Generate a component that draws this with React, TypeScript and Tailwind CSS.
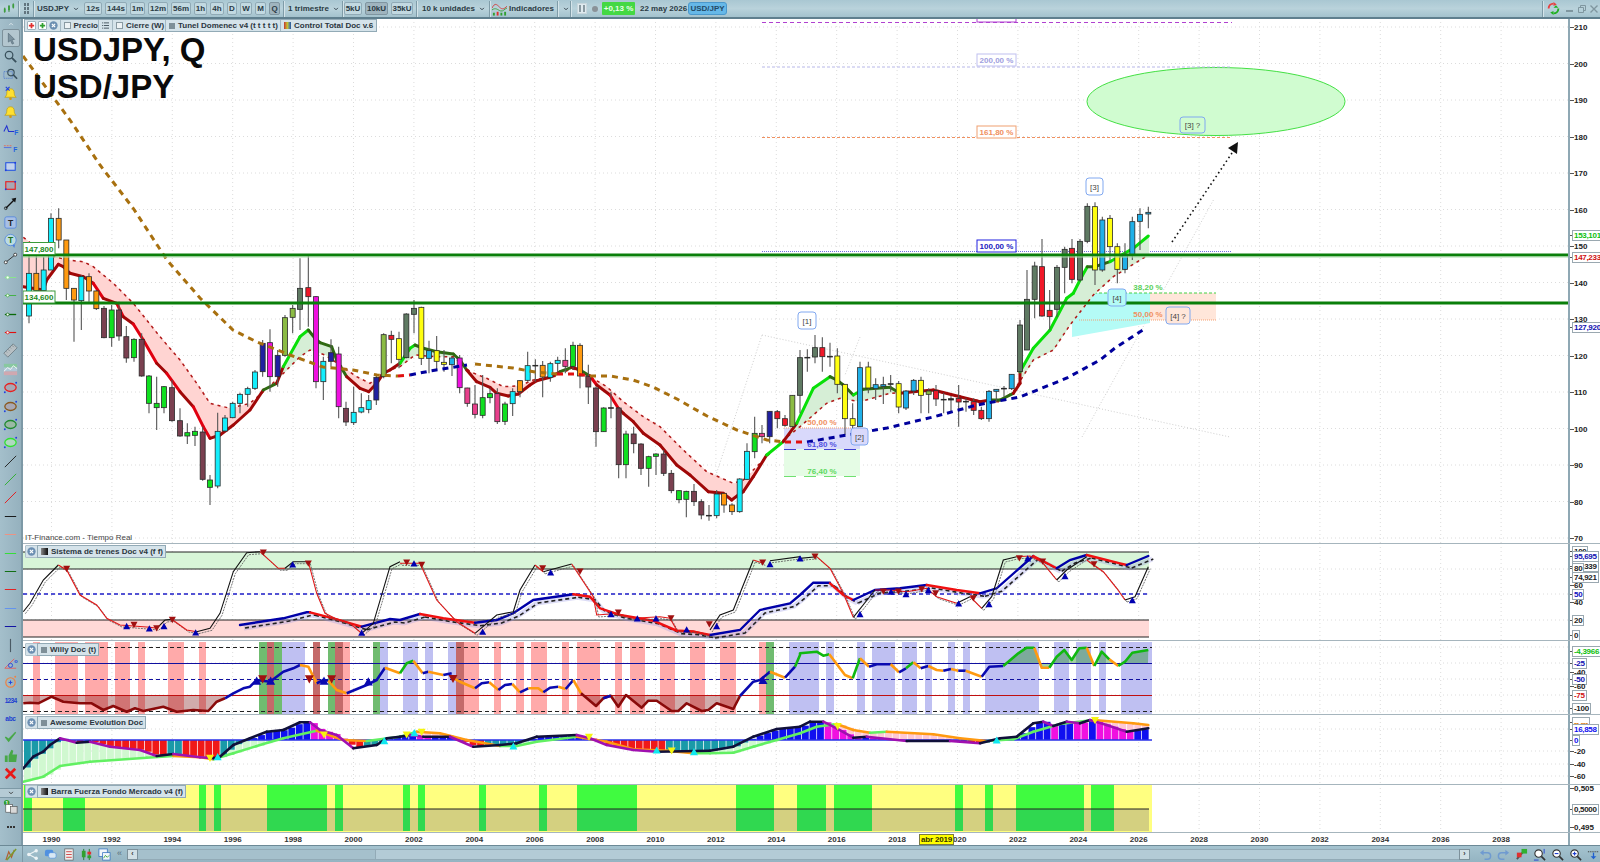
import React from 'react';

type Pt = [number, number];

// points were read off the chart in crop coordinates, P turns them into page coordinates
const P = (ox: number, oy: number, a: number[]): Pt[] => {
  const out: Pt[] = [];
  for (let i = 0; i < a.length; i += 2) out.push([ox + a[i] / 3, oy + a[i + 1] / 3]);
  return out;
};
const Z3 = (a: number[]) => P(0, 520, a);
const Z11 = (a: number[]) => P(400, 540, a);
const Z12 = (a: number[]) => P(800, 540, a);
const d = (pts: Pt[]) => pts.map((p, i) => `${i ? 'L' : 'M'}${p[0].toFixed(1)} ${p[1].toFixed(1)}`).join(' ');
const at = (pts: Pt[], x: number) => {
  if (x <= pts[0][0]) return pts[0][1];
  for (let i = 1; i < pts.length; i++) {
    if (x <= pts[i][0]) {
      const [x0, y0] = pts[i - 1];
      const [x1, y1] = pts[i];
      return y0 + ((y1 - y0) * (x - x0)) / Math.max(x1 - x0, 0.01);
    }
  }
  return pts[pts.length - 1][1];
};

const C: Record<string, string> = {
  c: '#14eefc', o: '#ff9a10', b: '#7a4050', g: '#10e020', n: '#2020a0', m: '#f010e0', v: '#8bbb44',
  s: '#5f7a63', r: '#f01828', y: '#ffff10', l: '#20b0e8', p: '#e8408c', k: '#222222',
};

type Candle = [number, number, number, number, number, string];
const candleGroups: { ox: number; oy: number; c: Candle[] }[] = [
  { ox: 0, oy: 120, c: [
    [87, 405, 460, 588, 610, 'c'], [109, 405, 460, 512, 512, 'o'], [131, 410, 450, 512, 512, 'c'], [153, 280, 295, 450, 450, 'c'],
    [176, 265, 295, 360, 385, 'o'], [199, 360, 360, 505, 540, 'o'], [222, 505, 505, 540, 665, 'o'], [244, 465, 470, 542, 630, 'c'],
    [267, 460, 470, 513, 545, 'o'], [289, 510, 513, 566, 570, 'o'], [312, 558, 565, 653, 655, 'b'], [335, 555, 570, 653, 680, 'g'],
    [357, 545, 570, 648, 662, 'b'], [379, 618, 650, 714, 728, 'b'], [402, 655, 658, 713, 725, 'g'], [425, 640, 658, 768, 770, 'b'],
    [447, 765, 768, 850, 880, 'g'], [470, 770, 850, 863, 930, 'g'], [492, 798, 800, 863, 880, 'g'], [516, 780, 803, 902, 905, 'b'],
    [540, 865, 902, 948, 950, 'b'], [562, 910, 938, 948, 972, 'g'], [585, 920, 934, 946, 978, 'g'], [608, 920, 936, 1078, 1082, 'b'],
    [630, 1065, 1080, 1102, 1155, 'g'], [653, 878, 934, 1098, 1105, 'c'], [675, 885, 894, 933, 935, 'c'], [698, 845, 850, 893, 895, 'c'],
    [720, 818, 823, 850, 880, 'c'], [743, 800, 806, 823, 860, 'c'], [765, 750, 756, 805, 810, 'c'], [788, 660, 670, 755, 770, 'n'],
    [810, 628, 668, 770, 815, 'm'], [833, 690, 706, 770, 800, 'n'], [855, 585, 593, 706, 710, 'v'], [878, 555, 565, 592, 640, 'v'],
    [900, 415, 505, 568, 630, 's'], [925, 405, 503, 530, 620, 'r'], [948, 528, 530, 785, 805, 'm'], [970, 710, 724, 785, 840, 'c'],
    [993, 658, 698, 724, 740, 'n'], [1016, 680, 702, 860, 895, 'm'], [1038, 845, 865, 906, 918, 'b'], [1061, 800, 877, 908, 915, 'c'],
    [1084, 820, 863, 876, 880, 'c'], [1106, 825, 842, 868, 880, 'c'], [1129, 765, 772, 840, 855, 'n'], [1151, 640, 644, 770, 775, 'v'],
    [1174, 632, 646, 658, 730, 'r'],
  ] },
  { ox: 390, oy: 290, c: [
    [27, 125, 146, 208, 235, 'y'], [49, 70, 72, 203, 205, 's'], [72, 30, 55, 73, 130, 's'], [94, 50, 52, 205, 225, 'y'],
    [117, 152, 182, 205, 250, 'l'], [140, 138, 182, 214, 240, 'y'], [162, 180, 217, 223, 245, 'y'], [186, 200, 204, 224, 258, 'l'],
    [209, 195, 204, 293, 310, 'm'], [232, 293, 294, 340, 350, 'p'], [255, 285, 342, 373, 385, 'p'], [278, 255, 323, 376, 385, 'g'],
    [300, 295, 311, 323, 340, 'g'], [322, 295, 311, 395, 402, 'p'], [345, 335, 342, 394, 405, 'g'], [368, 295, 305, 341, 378, 'c'],
    [390, 270, 272, 305, 322, 'o'], [413, 185, 227, 271, 275, 'c'], [436, 208, 226, 228, 275, 'k'], [458, 213, 226, 261, 322, 'o'],
    [481, 215, 221, 262, 275, 'c'], [503, 200, 211, 220, 250, 'c'], [526, 175, 211, 229, 250, 'p'], [549, 155, 166, 229, 240, 'g'],
    [570, 160, 166, 258, 295, 'o'], [595, 224, 259, 291, 342, 'b'], [618, 290, 294, 425, 470, 'b'], [641, 352, 354, 425, 425, 'g'],
    [663, 305, 353, 355, 385, 'k'], [686, 352, 354, 524, 565, 'b'], [708, 422, 432, 524, 565, 'g'], [731, 410, 432, 461, 490, 'b'],
    [753, 460, 462, 535, 555, 'b'], [776, 497, 500, 535, 590, 'g'], [798, 490, 492, 499, 555, 'g'], [821, 480, 492, 550, 558, 'b'],
    [844, 540, 550, 602, 610, 'b'], [867, 600, 602, 629, 640, 'g'], [889, 602, 604, 628, 682, 'g'], [912, 582, 604, 635, 648, 'b'],
    [934, 628, 635, 675, 688, 'b'], [957, 645, 676, 678, 692, 'k'], [980, 600, 612, 677, 685, 'c'], [1002, 610, 610, 645, 668, 'o'],
    [1026, 640, 645, 665, 675, 'o'], [1049, 565, 567, 665, 668, 'c'], [1071, 460, 484, 568, 570, 'c'],
  ] },
  { ox: 700, oy: 300, c: [
    [164, 350, 400, 455, 475, 'g'], [186, 375, 400, 410, 430, 'p'], [209, 334, 334, 410, 430, 'n'], [232, 330, 335, 356, 385, 'r'],
    [255, 345, 356, 376, 380, 'r'], [277, 285, 286, 380, 382, 'v'], [300, 150, 173, 286, 340, 's'], [322, 148, 172, 174, 215, 'k'],
    [345, 105, 143, 171, 190, 's'], [367, 112, 143, 170, 215, 'r'], [390, 128, 169, 171, 200, 'k'], [412, 145, 168, 253, 280, 'y'],
    [435, 253, 253, 356, 405, 'y'], [458, 310, 356, 376, 400, 'y'], [480, 185, 203, 380, 382, 'l'], [505, 185, 201, 264, 280, 'y'],
    [527, 235, 254, 266, 300, 'l'], [550, 230, 254, 259, 312, 'l'], [572, 225, 251, 253, 275, 'k'], [596, 243, 251, 321, 340, 'y'],
    [618, 270, 273, 324, 330, 'l'], [641, 237, 241, 273, 285, 'l'], [663, 230, 241, 286, 340, 'y'], [686, 265, 273, 283, 340, 'v'],
    [708, 255, 272, 297, 318, 'r'], [731, 278, 298, 300, 340, 'k'], [753, 288, 296, 300, 335, 'k'], [776, 255, 295, 306, 380, 'r'],
    [798, 295, 304, 306, 335, 'k'], [821, 295, 305, 331, 345, 'r'], [844, 320, 331, 356, 360, 'r'], [867, 270, 274, 356, 365, 'l'],
    [889, 268, 268, 274, 305, 'l'], [912, 258, 265, 267, 290, 'k'], [935, 222, 223, 266, 270, 'l'],
  ] },
  { ox: 1000, oy: 160, c: [
    [60, 480, 495, 635, 640, 's'], [81, 330, 418, 570, 570, 's'], [104, 305, 318, 418, 475, 's'], [126, 237, 320, 468, 470, 'r'],
    [149, 390, 451, 470, 510, 'r'], [171, 315, 322, 448, 472, 's'], [194, 260, 268, 322, 400, 's'], [216, 237, 265, 358, 370, 'r'],
    [240, 237, 244, 360, 365, 's'], [262, 130, 139, 244, 250, 's'], [285, 127, 140, 330, 375, 'y'], [307, 170, 180, 330, 335, 'l'],
    [330, 165, 175, 260, 300, 'y'], [352, 250, 260, 328, 370, 'y'], [375, 250, 286, 328, 340, 'l'], [397, 170, 185, 285, 300, 'l'],
    [420, 145, 163, 184, 270, 'l'], [445, 140, 157, 162, 205, 'l'],
  ] },
];

const tunnelSolid: Pt[] = [
  ...P(0, 120, [70, 500, 130, 510, 140, 480, 175, 433, 190, 440, 210, 460, 250, 470, 280, 490, 310, 535, 350, 550, 370, 590, 400, 612, 430, 660, 470, 730, 500, 760, 540, 815, 580, 860, 610, 920, 630, 955, 660, 945, 700, 915, 750, 870, 790, 810, 830, 790, 850, 740, 900, 650, 925, 630, 945, 655, 960, 668, 995, 680, 1010, 720, 1040, 770, 1080, 805, 1106, 815, 1130, 790, 1150, 760]),
  ...P(390, 290, [0, 240, 30, 220, 60, 175, 75, 165, 100, 175, 140, 185, 190, 192, 210, 210, 230, 240, 260, 275, 300, 292, 320, 310, 355, 318, 385, 312, 420, 285, 440, 272, 480, 262, 510, 245, 545, 232, 570, 240, 600, 258, 620, 285, 660, 315, 685, 355, 700, 370, 730, 395, 760, 430, 810, 465, 860, 525, 900, 555, 955, 605, 1000, 610, 1025, 630, 1045, 615]),
  ...P(700, 300, [130, 575, 160, 530, 200, 465, 250, 425, 290, 370, 340, 265, 390, 230, 410, 240, 430, 255, 460, 285, 490, 268, 570, 262, 600, 280, 640, 275, 700, 270, 780, 290, 840, 305, 870, 300, 900, 300, 940, 280, 960, 250]),
  ...P(1000, 160, [60, 635, 100, 565, 150, 510, 200, 415, 220, 400, 245, 350, 262, 320, 285, 320, 330, 305, 400, 265, 445, 228]),
];
const tunnelDash: Pt[] = [
  ...P(0, 120, [70, 352, 130, 400, 200, 420, 250, 425, 280, 440, 340, 490, 400, 550, 480, 650, 540, 720, 590, 790, 630, 850, 690, 865, 750, 850, 790, 815, 840, 770, 900, 710, 930, 690, 975, 705, 1020, 735, 1070, 770, 1110, 790, 1150, 760]),
  ...P(390, 290, [0, 240, 30, 230, 75, 195, 140, 200, 190, 200, 240, 245, 290, 265, 340, 290, 390, 287, 430, 270, 500, 258, 545, 235, 600, 260, 650, 290, 700, 335, 760, 380, 810, 410, 880, 480, 950, 545, 1030, 580]),
  ...P(700, 300, [130, 540, 190, 480, 250, 420, 300, 380, 380, 310, 420, 295, 480, 305, 570, 280, 640, 275, 700, 272, 780, 290, 850, 305, 900, 305, 940, 275, 1000, 180]),
  ...P(1000, 160, [160, 570, 210, 495, 280, 405, 340, 350, 445, 285]),
];

const maBrown: Pt[][] = [
  [[23, 56], [37, 75], [50, 93], [70, 120], [100, 165], [133, 208], [167, 260], [200, 298], [233, 330], [257, 342], [290, 355], [323, 367], [353, 370], [377, 375], [398, 376]],
  [[475, 364], [513, 368], [535, 372], [557, 374]],
  [[590, 376], [610, 376], [633, 380], [653, 387], [677, 399], [707, 416], [737, 430], [767, 440], [785, 442]],
];
const maRed: Pt[][] = [[[398, 376], [410, 375]], [[557, 374], [575, 374], [590, 376]], [[785, 442], [807, 442]]];
const maNavy: Pt[][] = [
  [[410, 375], [430, 371], [467, 365]],
  [[807, 442], [847, 435], [887, 428], [933, 417], [977, 405], [1020, 397], [1067, 378], [1100, 360], [1115, 348], [1146, 328]],
];

const years = Array.from({ length: 25 }, (_, i) => 1990 + i * 2);
const yearX = (i: number) => 51.5 + i * 60.4;

const Grid: React.FC<{ ys: number[]; top: number; bottom: number }> = ({ ys, top, bottom }) => (
  <g stroke="#dcdcdc" strokeWidth={1} strokeDasharray="1 3">
    {years.map((_, i) => <line key={i} x1={yearX(i)} x2={yearX(i)} y1={top} y2={bottom} />)}
    {ys.map((y) => <line key={y} x1={23} x2={1568} y1={y} y2={y} />)}
  </g>
);

const Box: React.FC<{ x: number; y: number; w: number; h: number; text: string; stroke: string; color: string; r?: number; bold?: boolean; fill?: string }> = ({ x, y, w, h, text, stroke, color, r = 0, bold = true, fill = '#ffffff' }) => (
  <g>
    <rect x={x} y={y} width={w} height={h} rx={r} fill={fill} stroke={stroke} strokeWidth={1} />
    <text x={x + w / 2} y={y + h / 2 + 3} textAnchor="middle" fill={color} className={bold ? 'text-[8px] font-bold' : 'text-[8px]'}>{text}</text>
  </g>
);

const priceGrid = [210, 200, 190, 180, 170, 160, 150, 140, 130, 120, 110, 100, 90, 80, 70].map((p) => 319 + (130 - p) * 3.65);

const MainChart: React.FC = () => {
  const cols = Array.from({ length: 1126 }, (_, i) => 23 + i);
  return (
    <svg viewBox="23 19 1545 524" className="block w-full h-full">
      <Grid ys={priceGrid} top={18} bottom={543} />
      {/* channel */}
      <g stroke="#cfcfcf" strokeWidth={1} strokeDasharray="1 2" fill="none">
        <path d="M762 335 L1230 437" />
        <path d="M710 493 L762 335" />
        <path d="M1082 437 L1214 199" />
        <path d="M860 337 L845 375" />
      </g>
      {/* fib levels */}
      <ellipse cx={1216} cy={101.5} rx={129} ry={34} fill="#d0fcd0" stroke="#44e044" strokeWidth={1} />
      <line x1={762} x2={1232} y1={22.5} y2={22.5} stroke="#b040d0" strokeDasharray="4 3" strokeWidth={1} />
      <line x1={762} x2={1232} y1={67} y2={67} stroke="#b8b8e8" strokeDasharray="3 2" strokeWidth={1} />
      <line x1={762} x2={1232} y1={137.5} y2={137.5} stroke="#f09060" strokeDasharray="3 2" strokeWidth={1} />
      <line x1={762} x2={1232} y1={251.5} y2={251.5} stroke="#7070e0" strokeDasharray="1 1" strokeWidth={1} />
      <Box x={977} y={11} w={39} h={11} text="" stroke="#b040d0" color="#b040d0" />
      <Box x={977} y={54} w={39} h={12} text="200,00 %" stroke="#c0c0f0" color="#a0a0e0" />
      <Box x={977} y={126} w={39} h={12} text="161,80 %" stroke="#f0a070" color="#f09060" />
      <Box x={977} y={240} w={39} h={12} text="100,00 %" stroke="#2020e0" color="#2020c0" />
      {/* lower fib boxes */}
      <rect x={1150} y={293} width={66} height={27} fill="#ffe6da" />
      <polygon points="1072,293 1150,293 1150,323 1072,337" fill="#b4fbf6" />
      <line x1={1079} x2={1216} y1={293} y2={293} stroke="#44d044" strokeDasharray="3 2" />
      <line x1={1079} x2={1216} y1={320} y2={320} stroke="#f5a070" strokeDasharray="1 1" />
      <rect x={784} y={428} width={76} height={21} fill="#d9d9fb" />
      <rect x={784} y={449} width={76} height={27} fill="#e5fce5" />
      <line x1={784} x2={860} y1={428} y2={428} stroke="#f5a070" strokeDasharray="1 1" />
      <line x1={784} x2={860} y1={449.5} y2={449.5} stroke="#4040d0" strokeDasharray="12 8" />
      <line x1={784} x2={860} y1={476.5} y2={476.5} stroke="#70e070" strokeDasharray="12 8" />
      {/* tunnel */}
      {cols.map((x) => {
        const a = at(tunnelSolid, x);
        const b = at(tunnelDash, x);
        return <rect key={x} x={x} y={Math.min(a, b)} width={1.1} height={Math.abs(a - b)} fill={b < a ? '#ffd4d2' : '#d6eed6'} />;
      })}
      <path d={d(tunnelDash)} fill="none" stroke="#b01818" strokeWidth={1.5} strokeDasharray="3 4" />
      {tunnelSolid.slice(1).map((p, i) => {
        const q = tunnelSolid[i];
        const slope = (p[1] - q[1]) / Math.max(p[0] - q[0], 0.1);
        const bull = q[1] < at(tunnelDash, q[0]) - 1;
        const color = bull ? (slope < -0.55 ? '#08e008' : '#2f6a12') : slope > 1.3 ? '#e00010' : '#a00808';
        return <path key={i} d={d([q, p])} fill="none" stroke={color} strokeWidth={3} strokeLinecap="round" />;
      })}
      {/* candles */}
      {candleGroups.map((g) =>
        g.c.map(([x, wt, bt, bb, wb, c]) => {
          const px = g.ox + x / 3;
          return (
            <g key={`${g.ox}-${x}`}>
              <line x1={px} x2={px} y1={g.oy + wt / 3} y2={g.oy + wb / 3} stroke="#555555" strokeWidth={1.1} />
              <rect x={px - 2.5} y={g.oy + bt / 3} width={5} height={Math.max((bb - bt) / 3, 0.6)} fill={C[c]} stroke="#2a2a2a" strokeWidth={0.8} />
            </g>
          );
        }),
      )}
      {/* long average */}
      {maBrown.map((p, i) => <path key={i} d={d(p)} fill="none" stroke="#a8700f" strokeWidth={3} strokeDasharray="6 5" />)}
      {maRed.map((p, i) => <path key={i} d={d(p)} fill="none" stroke="#e01010" strokeWidth={3} strokeDasharray="6 5" />)}
      {maNavy.map((p, i) => <path key={i} d={d(p)} fill="none" stroke="#00009c" strokeWidth={3} strokeDasharray="6 5" />)}
      {/* support lines */}
      <line x1={23} x2={1568} y1={255} y2={255} stroke="#0a7f0a" strokeWidth={3} />
      <line x1={23} x2={1568} y1={303} y2={303} stroke="#0a7f0a" strokeWidth={3} />
      <line x1={23} x2={1568} y1={257} y2={257} stroke="#a8dca8" strokeWidth={1} />
      <Box x={23} y={242.5} w={32} h={12} text="147,800" stroke="#3a9a3a" color="#1a8a1a" />
      <Box x={23} y={291} w={32} h={12} text="134,600" stroke="#3a9a3a" color="#1a8a1a" />
      {/* fib texts */}
      <text x={1148} y={290} textAnchor="middle" fill="#5ad05a" className="text-[8px] font-bold">38,20 %</text>
      <text x={1148} y={317} textAnchor="middle" fill="#f09060" className="text-[8px] font-bold">50,00 %</text>
      <text x={822} y={425} textAnchor="middle" fill="#f09060" className="text-[8px] font-bold">50,00 %</text>
      <text x={822} y={447} textAnchor="middle" fill="#5050e0" className="text-[8px] font-bold">61,80 %</text>
      <text x={822} y={474} textAnchor="middle" fill="#60d860" className="text-[8px] font-bold">76,40 %</text>
      {/* wave marks */}
      <Box x={1086} y={178} w={17} h={17} r={3} text="[3]" stroke="#80a8f0" color="#444444" bold={false} />
      <Box x={1180} y={117} w={25} h={16} r={3} text="[3] ?" stroke="#80a8f0" color="#444444" bold={false} fill="#d0fcd0" />
      <Box x={1108} y={289} w={18} h={17} r={3} text="[4]" stroke="#80a8f0" color="#444444" bold={false} fill="#b4fbf6" />
      <Box x={1166} y={307} w={24} h={17} r={3} text="[4] ?" stroke="#80a8f0" color="#444444" bold={false} fill="#ffe6da" />
      <Box x={798} y={312} w={18} h={17} r={3} text="[1]" stroke="#80a8f0" color="#444444" bold={false} />
      <Box x={851} y={428} w={17} h={17} r={3} text="[2]" stroke="#80a8f0" color="#444444" bold={false} fill="#d9d9fb" />
      {/* projection */}
      <line x1={1172} y1={242} x2={1232} y2={153} stroke="#111111" strokeWidth={1.6} strokeDasharray="1.6 3" />
      <polygon points="1238,142 1237,154 1228,148" fill="#111111" />
    </svg>
  );
};

const slowLine: { c: string; p: Pt[] }[] = [
  { c: 'n', p: Z3([720, 315, 850, 295, 920, 277, 930, 277]) },
  { c: 'r', p: Z3([930, 277, 1000, 295, 1085, 320]) },
  { c: 'n', p: [...Z3([1085, 320, 1170, 297]), ...Z11([0, 240, 60, 222])] },
  { c: 'r', p: Z11([60, 222, 130, 235, 225, 248]) },
  { c: 'n', p: Z11([225, 248, 290, 240, 340, 220, 400, 180, 520, 163]) },
  { c: 'r', p: Z11([520, 163, 570, 170, 600, 205, 660, 225, 760, 242, 830, 272, 880, 275, 930, 285]) },
  { c: 'n', p: [...Z11([930, 285, 1020, 270, 1080, 210, 1170, 190]), ...Z12([0, 165, 40, 128, 90, 128])] },
  { c: 'r', p: Z12([90, 130, 130, 165, 160, 180]) },
  { c: 'n', p: Z12([160, 180, 225, 150, 300, 145, 380, 135]) },
  { c: 'r', p: Z12([380, 135, 470, 150, 540, 160]) },
  { c: 'n', p: Z12([540, 160, 590, 145, 700, 48]) },
  { c: 'r', p: Z12([700, 48, 770, 85]) },
  { c: 'n', p: Z12([770, 85, 810, 60, 860, 45]) },
  { c: 'r', p: Z12([860, 45, 960, 70, 980, 75]) },
  { c: 'n', p: Z12([980, 75, 1045, 48]) },
];
const fastLine: { c: string; p: Pt[] }[] = [
  { c: 'k', p: Z3([70, 275, 90, 250, 130, 180, 175, 135]) },
  { c: 'r', p: Z3([175, 135, 200, 150, 240, 225, 290, 255, 320, 295, 360, 315, 400, 318, 450, 322, 470, 325]) },
  { c: 'k', p: Z3([470, 325, 495, 300, 515, 298]) },
  { c: 'r', p: Z3([515, 298, 560, 330, 590, 335]) },
  { c: 'k', p: Z3([590, 335, 630, 325, 660, 280, 700, 155, 740, 98, 780, 95]) },
  { c: 'r', p: Z3([780, 95, 835, 145, 855, 145]) },
  { c: 'k', p: Z3([855, 145, 880, 125, 925, 125]) },
  { c: 'r', p: Z3([925, 125, 950, 220, 975, 280, 1005, 295, 1050, 310, 1085, 340]) },
  { c: 'k', p: [...Z3([1085, 340, 1120, 310, 1170, 140, 1200, 125])] },
  { c: 'r', p: Z11([0, 70, 60, 70, 110, 180, 170, 245, 225, 280]) },
  { c: 'k', p: Z11([225, 280, 290, 225, 340, 215, 360, 150, 405, 75]) },
  { c: 'r', p: Z11([405, 75, 430, 95]) },
  { c: 'k', p: Z11([430, 95, 515, 72]) },
  { c: 'r', p: Z11([515, 72, 580, 170, 590, 225, 630, 222, 650, 220, 700, 235, 780, 230, 810, 235, 830, 270, 880, 272, 930, 285]) },
  { c: 'k', p: Z11([930, 270, 960, 225, 1000, 210, 1060, 60]) },
  { c: 'r', p: Z11([1060, 60, 1090, 70]) },
  { c: 'k', p: [...Z11([1110, 62, 1200, 50]), ...Z12([0, 55, 50, 50])] },
  { c: 'r', p: Z12([50, 50, 90, 85, 130, 160, 160, 232]) },
  { c: 'k', p: Z12([160, 232, 225, 150]) },
  { c: 'r', p: Z12([225, 150, 270, 150, 320, 155, 380, 145, 410, 170, 470, 190]) },
  { c: 'k', p: Z12([470, 190, 510, 170]) },
  { c: 'r', p: Z12([510, 170, 545, 205]) },
  { c: 'k', p: Z12([545, 205, 575, 170, 610, 60, 650, 50]) },
  { c: 'r', p: Z12([650, 50, 690, 48, 725, 65, 770, 120]) },
  { c: 'k', p: Z12([770, 120, 800, 90, 860, 50]) },
  { c: 'r', p: Z12([860, 60, 910, 95, 950, 145, 975, 180]) },
  { c: 'k', p: Z12([975, 180, 1005, 170, 1045, 80]) },
];
const upMarks: Pt[] = [
  ...Z3([380, 318, 448, 325, 492, 318, 587, 337, 878, 133, 1085, 338]),
  ...Z11([42, 70, 452, 97, 248, 275, 633, 222, 712, 235, 768, 235, 860, 268, 950, 258, 1110, 72, 1200, 55]),
  ...Z12([180, 222, 273, 155, 318, 162, 385, 150, 476, 190, 567, 192, 683, 55, 795, 108, 997, 180]),
];
const downMarks: Pt[] = [
  ...Z3([200, 147, 402, 315, 470, 325, 517, 300, 790, 98, 925, 131]),
  ...Z11([20, 68, 65, 75, 428, 85, 540, 95, 655, 218, 813, 235, 928, 253, 1088, 68]),
  ...Z12([45, 50, 250, 155, 295, 155, 365, 148, 407, 160, 520, 175, 658, 55, 728, 65, 882, 73]),
];
const Up: React.FC<{ p: Pt; fill: string; s?: number }> = ({ p, fill, s = 3.5 }) => (
  <polygon points={`${p[0] - s},${p[1] + s * 0.9} ${p[0] + s},${p[1] + s * 0.9} ${p[0]},${p[1] - s * 0.9}`} fill={fill} />
);
const Down: React.FC<{ p: Pt; fill: string; s?: number }> = ({ p, fill, s = 3.5 }) => (
  <polygon points={`${p[0] - s},${p[1] - s * 0.9} ${p[0] + s},${p[1] - s * 0.9} ${p[0]},${p[1] + s * 0.9}`} fill={fill} />
);

const TrendPane: React.FC = () => (
  <svg viewBox="23 544 1545 96" className="block w-full h-full">
    <Grid ys={[569, 594, 620]} top={543} bottom={640} />
    <rect x={23} y={552} width={1126} height={17} fill="#d8f5d8" />
    <rect x={23} y={620} width={1126} height={17} fill="#ffd9d7" />
    <g stroke="#222222" strokeWidth={1}>
      <line x1={23} x2={1149} y1={552} y2={552} />
      <line x1={23} x2={1149} y1={569} y2={569} />
      <line x1={23} x2={1149} y1={620} y2={620} />
      <line x1={23} x2={1149} y1={637} y2={637} />
    </g>
    <line x1={23} x2={1149} y1={594} y2={594} stroke="#1c1cc8" strokeWidth={1.5} strokeDasharray="4 3" />
    {slowLine.map((s, i) => <path key={i} d={d(s.p)} transform="translate(4 3)" fill="none" stroke="#9090e0" strokeOpacity={0.3} strokeWidth={5} />)}
    {slowLine.map((s, i) => <path key={i} d={d(s.p)} transform="translate(5 3)" fill="none" stroke="#222222" strokeWidth={1.6} strokeDasharray="4 3" />)}
    {slowLine.map((s, i) => <path key={i} d={d(s.p)} fill="none" stroke={s.c === 'n' ? '#0000a8' : '#f01010'} strokeWidth={2.4} strokeLinecap="round" />)}
    {fastLine.map((s, i) => <path key={i} d={d(s.p)} transform="translate(2 2)" fill="none" stroke="#555555" strokeWidth={0.8} strokeDasharray="2 1" />)}
    {fastLine.map((s, i) => <path key={i} d={d(s.p)} fill="none" stroke={s.c === 'k' ? '#111111' : '#e01818'} strokeWidth={1.1} />)}
    {upMarks.map((p, i) => <Up key={i} p={p} fill="#0000b0" />)}
    {downMarks.map((p, i) => <Down key={i} p={p} fill="#a01010" />)}
  </svg>
);

const lav = '#bfc0f2';
const wRed = '#ffaaaa';
const wGreen = '#70bc70';
const wDark = '#c46a6a';
const willyBands: [number, number, string][] = [
  [33, 40, wRed], [55, 78, wRed], [85, 108, wRed], [115, 130, wRed], [138, 145, wRed], [168, 184, wRed], [199, 206, wRed],
  [259, 267, wGreen], [267, 274, wDark], [274, 282, wGreen], [282, 305, lav], [313, 320, wDark], [328, 335, wGreen], [335, 343, wDark],
  [343, 350, wRed], [373, 380, wGreen], [380, 388, lav], [403, 418, lav], [425, 433, lav], [448, 456, lav], [456, 464, wDark],
  [464, 479, wRed], [494, 501, wRed], [516, 524, wRed], [531, 547, wRed], [562, 569, wRed], [577, 600, wRed], [615, 622, wRed],
  [630, 645, wRed], [660, 675, wRed], [690, 705, wRed], [720, 736, wRed], [759, 766, wRed], [766, 774, wGreen], [789, 819, lav],
  [826, 834, lav], [857, 865, lav], [872, 895, lav], [902, 917, lav], [925, 932, lav], [948, 955, lav], [963, 970, lav],
  [985, 1039, lav], [1054, 1069, lav], [1076, 1091, lav], [1099, 1106, lav], [1121, 1152, lav],
];
const W = { d: '#8a0a0a', n: '#0a0ab0', o: '#ff9a10', g: '#10b810' };
const redArea1 = Z3([70, 550, 90, 548, 115, 550, 155, 530, 190, 545, 240, 550, 275, 550, 310, 570, 340, 558, 380, 575, 405, 565, 430, 573, 490, 560, 530, 575, 580, 570, 625, 573, 650, 545, 675, 535]);
const redArea2 = Z11([543, 460, 588, 498, 610, 475, 632, 467, 655, 500, 678, 465, 725, 503, 745, 482, 770, 482, 815, 513, 835, 513, 860, 490, 905, 513, 925, 510, 950, 490, 1000, 507, 1020, 468]);
const greenArea = Z12([610, 378, 655, 340, 680, 323, 703, 323, 725, 383, 748, 383, 770, 350, 793, 330, 815, 360, 838, 325, 860, 323, 883, 378, 905, 335, 928, 358, 955, 378, 975, 365, 997, 338, 1045, 330]);
const willyLine: [string, Pt[]][] = [
  [W.d, redArea1],
  [W.n, Z3([675, 535, 700, 520, 730, 505, 750, 500, 770, 480, 810, 485, 850, 455, 880, 445, 900, 435])],
  [W.o, Z3([900, 435, 925, 440, 950, 490])],
  [W.n, Z3([950, 490, 970, 480, 985, 482])],
  [W.o, Z3([985, 482, 1010, 510, 1040, 520])],
  [W.n, Z3([1040, 520, 1100, 495, 1130, 480, 1155, 443])],
  [W.o, Z3([1155, 443, 1200, 460])],
  [W.g, Z11([0, 400, 20, 370, 40, 362])],
  [W.o, Z11([40, 362, 68, 400])], [W.n, Z11([68, 400, 85, 395])], [W.o, Z11([85, 395, 130, 405])], [W.n, Z11([130, 405, 155, 400])],
  [W.o, Z11([155, 412, 180, 425, 225, 445])], [W.n, Z11([225, 445, 245, 430, 268, 427])], [W.o, Z11([268, 427, 295, 450])],
  [W.n, Z11([295, 450, 315, 435, 337, 432])], [W.o, Z11([337, 432, 360, 457])], [W.n, Z11([360, 457, 385, 445])],
  [W.o, Z11([385, 445, 415, 445, 430, 457])], [W.n, Z11([430, 457, 450, 443, 475, 440])], [W.o, Z11([475, 440, 497, 447])],
  [W.n, Z11([497, 447, 520, 420])], [W.o, Z11([520, 420, 543, 460])],
  [W.d, redArea2],
  [W.n, Z11([610, 475, 632, 467])],
  [W.n, Z11([1020, 468, 1060, 425, 1080, 420, 1110, 395])], [W.o, Z11([1110, 395, 1155, 413])], [W.n, Z11([1155, 413, 1185, 380])],
  [W.g, [...Z11([1185, 380, 1200, 345]), ...Z12([0, 340, 50, 335, 70, 347, 88, 343])]],
  [W.o, Z12([88, 343, 135, 405, 158, 415])], [W.g, Z12([158, 415, 180, 355])], [W.o, Z12([180, 355, 207, 380])],
  [W.n, Z12([207, 380, 230, 373, 272, 373])], [W.o, Z12([272, 373, 297, 397])], [W.n, Z12([297, 397, 318, 385])], [W.g, Z12([318, 385, 340, 367])],
  [W.o, Z12([340, 367, 362, 385])], [W.n, Z12([362, 385, 385, 378])], [W.o, Z12([385, 378, 410, 390, 430, 392])], [W.n, Z12([430, 392, 453, 387])],
  [W.o, Z12([453, 387, 475, 392])], [W.n, Z12([475, 392, 497, 392])], [W.o, Z12([497, 392, 545, 410])], [W.n, Z12([545, 410, 568, 380, 610, 378])],
  [W.g, Z12([610, 378, 655, 340, 680, 323, 703, 323])], [W.o, Z12([703, 323, 725, 383, 748, 383])], [W.g, Z12([748, 383, 770, 350, 793, 330, 815, 360, 838, 325, 860, 323])],
  [W.o, Z12([860, 323, 883, 378])], [W.g, Z12([883, 378, 905, 335, 928, 358])], [W.o, Z12([928, 358, 955, 378])], [W.g, Z12([955, 378, 975, 365, 997, 338, 1045, 330])],
];

const WillyPane: React.FC = () => (
  <svg viewBox="23 641 1545 73" className="block w-full h-full">
    <Grid ys={[647, 663, 679, 695, 711]} top={640} bottom={714} />
    {willyBands.map(([a, b, c]) => <rect key={a} x={a} y={642} width={b - a} height={72} fill={c} />)}
    <path d={`${d(redArea1)} L225 695 L23 695 Z`} fill="#7a1010" fillOpacity={0.35} />
    <path d={`${d(redArea2)} L740 695 L581 695 Z`} fill="#7a1010" fillOpacity={0.35} />
    <path d={`${d(greenArea)} L1148 663 L1003 663 Z`} fill="#1a8a1a" fillOpacity={0.4} />
    <line x1={23} x2={1152} y1={647.5} y2={647.5} stroke="#222222" strokeDasharray="4 3" />
    <line x1={23} x2={1152} y1={663.5} y2={663.5} stroke="#1010a0" strokeWidth={1.2} />
    <line x1={23} x2={1152} y1={679.5} y2={679.5} stroke="#1010a0" strokeWidth={1.2} strokeDasharray="4 3" />
    <line x1={23} x2={1152} y1={695.5} y2={695.5} stroke="#c01010" strokeWidth={1.2} />
    <line x1={23} x2={1152} y1={711.5} y2={711.5} stroke="#222222" strokeDasharray="4 3" />
    {willyLine.map(([c, p], i) => <path key={i} d={d(p)} fill="none" stroke={c} strokeWidth={2.6} strokeLinejoin="round" />)}
    {Z3([770, 482, 812, 482, 972, 482, 1105, 484]).map((p, i) => <Up key={i} p={p} fill="#0a0ab0" s={4.5} />)}
    {Z3([788, 478, 928, 478, 995, 478]).map((p, i) => <Down key={i} p={p} fill="#a01010" s={4.5} />)}
    <Down p={[453, 679]} fill="#a01010" s={4.5} />
    <Up p={[763, 680]} fill="#0a0ab0" s={4.5} />
  </svg>
);

const osc: Pt[] = [
  ...Z3([70, 745, 100, 710, 130, 695, 150, 675, 180, 655, 230, 668, 270, 665, 330, 680, 420, 690, 470, 708, 520, 702, 600, 712, 640, 715, 660, 710, 700, 675, 750, 655, 800, 635, 850, 630, 900, 607, 930, 607, 960, 630, 1010, 645, 1060, 685, 1130, 675, 1160, 655]),
  ...Z11([0, 590, 30, 585, 70, 590, 150, 590, 220, 620, 300, 615, 350, 610, 410, 590, 530, 585, 570, 595, 620, 615, 700, 630, 770, 635, 930, 632, 1000, 620, 1060, 590, 1130, 567]),
  ...Z12([0, 560, 30, 545, 70, 545, 110, 565, 160, 593, 200, 590, 320, 603, 450, 603, 540, 610, 600, 595, 650, 590, 700, 550, 730, 545, 760, 558, 800, 545, 840, 550, 870, 540, 920, 555, 980, 575, 1045, 565]),
];
const sig: Pt[] = [
  ...Z3([70, 785, 130, 770, 180, 738, 270, 725, 440, 713, 520, 708, 600, 712, 640, 718, 700, 700, 790, 672, 850, 655, 950, 632, 1030, 660, 1100, 663]),
  ...Z11([0, 590, 50, 575, 120, 580, 200, 600, 300, 618, 350, 618, 410, 605, 530, 590, 620, 605, 700, 628, 800, 632, 880, 640, 930, 640, 1000, 638, 1060, 620, 1130, 600]),
  ...Z12([0, 580, 50, 560, 110, 552, 160, 570, 210, 578, 260, 575, 400, 583, 480, 595, 560, 603, 640, 598, 700, 575, 780, 552, 880, 540, 1000, 550, 1045, 555]),
];

const AwesomePane: React.FC = () => {
  const bars = Array.from({ length: 149 }, (_, i) => 24 + i * 7.553);
  return (
    <svg viewBox="23 715 1545 69" className="block w-full h-full">
      <Grid ys={[729, 751, 764, 776]} top={714} bottom={784} />
      {bars.map((x) => {
        const o = at(osc, x);
        const s = at(sig, x);
        const prev = at(osc, x - 7.5);
        const rising = o <= prev;
        const col = o > 740 ? (rising ? '#1a9aa8' : '#f01818') : rising ? '#1010f0' : '#f010e0';
        return (
          <g key={x}>
            <rect x={x} y={Math.min(s, o)} width={6.8} height={Math.abs(s - o)} fill={s > o ? '#d0f8d0' : '#ffc8d4'} />
            <rect x={x} y={Math.min(740, o)} width={6.8} height={Math.abs(740 - o)} fill={col} />
          </g>
        );
      })}
      <line x1={23} x2={1152} y1={740} y2={740} stroke="#2a30e8" strokeWidth={1.6} />
      {sig.slice(1).map((p, i) => {
        const q = sig[i];
        return <path key={i} d={d([q, p])} stroke={p[1] > q[1] + 0.2 ? '#ff9a10' : '#62f062'} strokeWidth={2.6} strokeLinecap="round" />;
      })}
      {osc.slice(1).map((p, i) => {
        const q = osc[i];
        return <path key={i} d={d([q, p])} stroke={p[1] > q[1] + 0.2 ? '#a010b0' : '#10103a'} strokeWidth={2.6} strokeLinecap="round" />;
      })}
      {[...Z3([630, 715, 972, 645]), ...Z11([20, 585, 65, 577, 567, 592, 815, 633]), ...Z12([113, 560, 885, 542])].map((p, i) => <Down key={i} p={p} fill="#f5f510" s={4} />)}
      {[...Z3([653, 710, 1153, 662]), ...Z11([43, 578, 340, 618, 770, 630, 882, 635]), ...Z12([590, 600])].map((p, i) => <Up key={i} p={p} fill="#10e8f0" s={4} />)}
    </svg>
  );
};

const forceBands: [number, number][] = [
  [24, 32], [63, 85], [199, 206], [214, 221], [267, 327], [335, 343], [403, 410], [418, 425], [479, 486], [539, 547], [577, 637],
  [736, 774], [797, 826], [834, 872], [955, 963], [985, 993], [1016, 1084], [1091, 1114],
];
const ForcePane: React.FC = () => (
  <svg viewBox="23 785 1545 47" className="block w-full h-full">
    <Grid ys={[]} top={784} bottom={832} />
    <rect x={23} y={785} width={1129} height={47} fill="#ffff80" />
    <rect x={23} y={809} width={1126} height={22} fill="#d4d080" />
    {forceBands.map(([a, b]) => (
      <g key={a}>
        <rect x={a} y={785} width={b - a} height={24} fill="#40fb40" />
        <rect x={a} y={809} width={b - a} height={22} fill="#30d850" />
      </g>
    ))}
    <line x1={23} x2={1149} y1={809} y2={809} stroke="#222222" strokeWidth={1} />
  </svg>
);

type AxisLabel = { y: number; t: string; color?: string; box?: boolean };
const Axis: React.FC<{ top: number; labels: AxisLabel[] }> = ({ top, labels }) => (
  <div className="relative w-[32px] h-full overflow-hidden border-l-2 border-[#8fa8b4] bg-white">
    {labels.map((l, i) => (
      <React.Fragment key={i}>
        <span className="absolute left-0 w-[4px] h-px bg-[#555555]" style={{ top: l.y - top }} />
        <span
          className={l.box
            ? 'absolute left-[2px] h-[11px] leading-[10px] px-[1px] bg-white border border-[#9aa8b0] text-[8px] font-bold tracking-[-0.3px] whitespace-nowrap'
            : 'absolute left-[4px] h-[11px] leading-[11px] text-[8px] font-bold whitespace-nowrap text-[#222222]'}
          style={{ top: l.y - top - 5, color: l.color }}
        >
          {l.t}
        </span>
      </React.Fragment>
    ))}
  </div>
);

const mainAxis: AxisLabel[] = [
  ...[210, 200, 190, 180, 170, 160, 150, 140, 130, 120, 110, 100, 90, 80, 70].map((p) => ({ y: 319 + (130 - p) * 3.65, t: String(p) })),
  { y: 235, t: '153,101', color: '#10c010', box: true },
  { y: 257, t: '147,233', color: '#d01010', box: true },
  { y: 327, t: '127,920', color: '#1010b0', box: true },
];

const LegendCross: React.FC<{ cls: string }> = ({ cls }) => (
  <span className="w-[9px] h-[9px] flex items-center justify-center bg-white border border-[#a0b4bf] rounded-[1px]">
    <svg viewBox="0 0 8 8" className={`w-[7px] h-[7px] ${cls}`}><path d="M3 1h2v2h2v2H5v2H3V5H1V3h2z" fill="currentColor" /></svg>
  </span>
);
const CircleX: React.FC = () => (
  <svg viewBox="0 0 10 10" className="w-[9px] h-[9px]">
    <circle cx={5} cy={5} r={4.6} fill="#6c8fb2" />
    <path d="M3.2 3.2l3.6 3.6M6.8 3.2l-3.6 3.6" stroke="#ffffff" strokeWidth={1.3} />
  </svg>
);
const PaneTitle: React.FC<{ cls: string; title: string; icon?: 'dark' | 'gray' }> = ({ cls, title, icon = 'gray' }) => (
  <>
    <span className={`absolute left-[2px] ${cls} w-[13px] h-[13px] flex items-center justify-center bg-[#d5e3ea] border border-[#b0c2cc] rounded-[1px]`}><CircleX /></span>
    <div className={`absolute left-[14px] ${cls} h-[13px] flex items-center gap-[3px] pl-[3px] pr-[2px] bg-[#d5e3ea] border border-[#92aab6] text-[8px] font-bold text-[#2b3640] whitespace-nowrap`}>
      {icon === 'dark' ? (
        <span className="w-[7px] h-[7px] bg-gradient-to-r from-[#8a8a8a] to-[#111111]" />
      ) : (
        <span className="w-[6px] h-[6px] bg-[#7e8f98]" />
      )}
      {title}
    </div>
  </>
);

const Pane: React.FC<{ cls: string; top: number; labels: AxisLabel[]; children: React.ReactNode }> = ({ cls, top, labels, children }) => (
  <div className={`flex ${cls} overflow-hidden`}>
    <div className="relative flex-1 min-w-0">{children}</div>
    <Axis top={top} labels={labels} />
  </div>
);

const Sep: React.FC = () => <span className="h-[16px] w-[2px] border-l border-r border-l-[#7f9ca8] border-r-[#d4e4ea] shrink-0" />;
const Chev: React.FC = () => (
  <svg viewBox="0 0 8 8" className="w-[6px] h-[6px] ml-[4px] shrink-0"><path d="M1.5 2.5L4 5l2.5-2.5" fill="none" stroke="#33434d" strokeWidth={1.3} /></svg>
);
const TfBtn: React.FC<{ t: string; cls: string; on?: boolean }> = ({ t, cls, on }) => (
  <span className={`${cls} h-[13px] flex items-center justify-center text-[8px] font-bold rounded-[2px] border text-[#2a3a44] ${on ? 'bg-[#9fb4be] border-[#7f95a0]' : 'bg-[#c2d9e1] border-[#90aab6]'}`}>{t}</span>
);

const TopBar: React.FC = () => (
  <div className="h-[19px] shrink-0 flex items-center bg-gradient-to-b from-[#a9c7d2] via-[#b9d2db] to-[#a3c2cd] border-b-2 border-[#5f7f8e] text-[8px] font-bold text-[#2a3a44] whitespace-nowrap">
    <span className="w-[18px] flex justify-center shrink-0">
      <svg viewBox="0 0 14 12" className="w-[12px] h-[11px]">
        <path d="M2 5v6M7 2v8M12 0v6" stroke="#2e7a2e" strokeWidth={1} />
        <rect x={1} y={6} width={2} height={4} fill="#3aa03a" /><rect x={6} y={3} width={2} height={5} fill="#3aa03a" /><rect x={11} y={1} width={2} height={4} fill="#3aa03a" />
      </svg>
    </span>
    <Sep />
    <span className="w-[13px] flex justify-center shrink-0">
      <span className="grid grid-cols-2 gap-[1px]">
        {[0, 1, 2, 3, 4, 5].map((i) => <span key={i} className="w-[2px] h-[3px] bg-[#61757f]" />)}
      </span>
    </span>
    <Sep />
    <span className="w-[48px] pl-[2px] flex items-center shrink-0">USDJPY<Chev /></span>
    <span className="flex gap-[3px] ml-[1px] shrink-0">
      <TfBtn t="12s" cls="w-[18px]" />
      <TfBtn t="144s" cls="w-[22px]" />
      <TfBtn t="1m" cls="w-[15px]" />
      <TfBtn t="12m" cls="w-[20px]" />
      <TfBtn t="56m" cls="w-[20px]" />
      <TfBtn t="1h" cls="w-[13px]" />
      <TfBtn t="4h" cls="w-[14px]" />
      <TfBtn t="D" cls="w-[10px]" />
      <TfBtn t="W" cls="w-[12px]" />
      <TfBtn t="M" cls="w-[11px]" />
      <TfBtn t="Q" cls="w-[11px]" on />
    </span>
    <span className="w-[3px] shrink-0" />
    <Sep />
    <span className="w-[57px] pl-[3px] flex items-center shrink-0">1 trimestre<Chev /></span>
    <Sep />
    <span className="flex gap-[3px] shrink-0">
      <TfBtn t="5kU" cls="w-[18px]" />
      <TfBtn t="10kU" cls="w-[23px]" on />
      <TfBtn t="35kU" cls="w-[22px]" />
    </span>
    <span className="w-[3px] shrink-0" />
    <Sep />
    <span className="w-[71px] pl-[4px] flex items-center shrink-0">10 k unidades<Chev /></span>
    <Sep />
    <svg viewBox="0 0 16 14" className="w-[15px] h-[14px] ml-[1px] shrink-0">
      <path d="M0 6c3-6 5-4 8-1s5 2 8-1" fill="none" stroke="#d04040" strokeWidth={1} />
      <path d="M0 8c4-3 6 0 9 1s4-2 7-3" fill="none" stroke="#40a040" strokeWidth={1} />
      <rect x={1} y={11} width={2} height={3} fill="#30a030" /><rect x={5} y={10} width={2} height={4} fill="#e03030" /><rect x={9} y={11} width={2} height={3} fill="#30a030" /><rect x={13} y={10} width={2} height={4} fill="#30a030" />
    </svg>
    <span className="w-[50px] pl-[2px] shrink-0">Indicadores</span>
    <Sep />
    <span className="w-[11px] flex items-center shrink-0"><Chev /></span>
    <Sep />
    <span className="w-[10px] h-[11px] ml-[5px] flex justify-center gap-[2px] bg-[#dfeaef] border border-[#c8d6dc] shrink-0 py-[1px]">
      <span className="w-[2px] bg-[#8a9aa2]" /><span className="w-[2px] bg-[#8a9aa2]" />
    </span>
    <span className="w-[6px] h-[6px] ml-[5px] rounded-full bg-[#8a9298] shrink-0" />
    <span className="w-[33px] h-[13px] ml-[4px] flex items-center justify-center bg-[#44d844] text-[#e8ffe8] rounded-[1px] shrink-0">+0,13 %</span>
    <span className="w-[46px] ml-[5px] shrink-0">22 may 2026</span>
    <span className="w-[39px] h-[13px] ml-[2px] flex items-center justify-center bg-[#66b8e8] border border-[#4a98cc] text-[#244a66] rounded-[3px] shrink-0">USD/JPY</span>
    <span className="ml-auto flex items-center h-full">
      <Sep />
      <svg viewBox="0 0 16 16" className="w-[13px] h-[13px] mx-[3px]">
        <path d="M2 8a6 6 0 0 1 6-6" fill="none" stroke="#e84040" strokeWidth={2.4} />
        <path d="M14 8a6 6 0 0 1-6 6" fill="none" stroke="#20b020" strokeWidth={2.4} />
        <path d="M8 0l4 3-4 2z" fill="#e84040" /><path d="M8 16l-4-3 4-2z" fill="#20b020" />
        <path d="M11 4l3 3h-6z" fill="#20b020" />
      </svg>
      <span className="w-[7px] h-[2px] mx-[3px] mt-[4px] bg-[#7f969f]" />
      <svg viewBox="0 0 8 8" className="w-[8px] h-[8px] mx-[2px]"><path d="M.5 2.5h5v5h-5zM2.5 2.5v-2h5v5h-2" fill="none" stroke="#7f969f" strokeWidth={1} /></svg>
      <svg viewBox="0 0 8 8" className="w-[8px] h-[8px] mx-[2px] mr-[2px]"><path d="M.5.5l7 7M7.5.5l-7 7" stroke="#7f969f" strokeWidth={1.4} /></svg>
    </span>
  </div>
);

const Bell: React.FC<{ cross?: boolean }> = ({ cross }) => (
  <>
    <path d="M9 4c-3 0-4 2-4 5 0 2-1 3-2 4h12c-1-1-2-2-2-4 0-3-1-5-4-5z" fill="#ffe030" stroke="#b89a10" strokeWidth={0.7} />
    <circle cx={9} cy={14.5} r={1.4} fill="#d09a10" />
    {cross && <path d="M4 2l4 4M8 2L4 6" stroke="#2040e0" strokeWidth={1.2} />}
  </>
);
const HLine: React.FC<{ c: string; w?: number; dot?: boolean }> = ({ c, w = 1, dot }) => (
  <>
    <line x1={3} x2={15} y1={9} y2={9} stroke={c} strokeWidth={w} />
    {dot && <circle cx={6} cy={9} r={1.5} fill="#ffffff" stroke={c} strokeWidth={0.8} />}
  </>
);
const Ellip: React.FC<{ c: string; f: string }> = ({ c, f }) => (
  <>
    <ellipse cx={9} cy={9} rx={6} ry={4.2} fill={f} stroke={c} strokeWidth={1.4} />
    <circle cx={3} cy={14} r={1} fill="#2040e0" /><circle cx={15} cy={4} r={1} fill="#2040e0" />
  </>
);
const Diag: React.FC<{ c: string }> = ({ c }) => <line x1={3} y1={15} x2={15} y2={3} stroke={c} strokeWidth={1} />;

const tools: React.ReactNode[] = [
  <path d="M6 3l7 7-3 .5 2 4-1.6.8-2-4L6 13z" fill="#7d93a0" stroke="#506672" strokeWidth={0.7} />,
  <g fill="none" stroke="#39505c"><circle cx={7.5} cy={7.5} r={4} strokeWidth={1.3} /><path d="M10.5 10.5L15 15" strokeWidth={2} /></g>,
  <g fill="none"><rect x={2} y={6} width={9} height={7} stroke="#3060d0" strokeWidth={0.8} strokeDasharray="1 1" /><circle cx={9.5} cy={7} r={3.4} stroke="#39505c" strokeWidth={1.2} /><path d="M12 9.5L16 13.5" stroke="#39505c" strokeWidth={1.8} /></g>,
  <Bell cross />,
  <Bell />,
  <g><path d="M2 10l3-6 2 6h6" fill="none" stroke="#2030d0" strokeWidth={1.1} /><text x={13} y={14} fill="#2060e0" className="text-[7px] font-bold">F</text></g>,
  <g><path d="M2 6h9" stroke="#e07060" strokeWidth={1.1} strokeDasharray="2 1" /><path d="M2 8h8" stroke="#5070e0" strokeWidth={1} /><text x={12} y={13} fill="#2060e0" className="text-[7px] font-bold">F</text></g>,
  <g><rect x={4} y={5} width={10} height={8} fill="#c2d2ec" stroke="#2050e0" strokeWidth={1.1} /><circle cx={4} cy={13} r={1} fill="#2040e0" /><circle cx={14} cy={5} r={1} fill="#2040e0" /></g>,
  <g><rect x={4} y={5} width={10} height={8} fill="#a8a8b4" stroke="#e82020" strokeWidth={1.2} /><circle cx={4} cy={13} r={1} fill="#2040e0" /><circle cx={14} cy={5} r={1} fill="#2040e0" /></g>,
  <g><path d="M4 14L13 5" stroke="#111111" strokeWidth={1.4} /><path d="M15 3l-1 5-4-4z" fill="#111111" /><circle cx={4} cy={14} r={1.5} fill="none" stroke="#111111" strokeWidth={0.7} /></g>,
  <g><rect x={3} y={3} width={12} height={12} rx={2} fill="#a8c0e4" stroke="#4a80e0" strokeWidth={0.8} /><text x={9} y={12.5} textAnchor="middle" fill="#222222" className="text-[9px] font-bold">T</text></g>,
  <g><circle cx={9} cy={8.5} r={6} fill="#bcdce0" stroke="#4a80e0" strokeWidth={0.8} /><path d="M11 14l2 3 1-4z" fill="#4a80e0" /><text x={9} y={12} textAnchor="middle" fill="#207020" className="text-[9px] font-bold">T</text></g>,
  <g><line x1={4} y1={13} x2={14} y2={5} stroke="#333333" strokeWidth={1} /><circle cx={4} cy={13} r={1.6} fill="#ffffff" stroke="#333333" strokeWidth={0.9} /><circle cx={14} cy={5} r={1.6} fill="#ffffff" stroke="#333333" strokeWidth={0.9} /></g>,
  <HLine c="#88e888" dot />,
  <HLine c="#40b040" dot />,
  <HLine c="#0a6a0a" w={1.4} dot />,
  <HLine c="#e01010" w={1.2} dot />,
  <g transform="rotate(-45 9 9)"><rect x={2} y={6} width={14} height={6} fill="#b8c0c4" stroke="#6a7a82" strokeWidth={0.8} /><path d="M5 6v2M8 6v3M11 6v2M14 6v3" stroke="#6a7a82" strokeWidth={0.6} /></g>,
  <g><rect x={2} y={3} width={14} height={4} fill="#88c8a0" /><rect x={2} y={7} width={14} height={4} fill="#b0c8d8" /><rect x={2} y={11} width={14} height={4} fill="#d0a8b0" /><path d="M2 11l4-4 3 2 3-4 4 3" fill="none" stroke="#ffffff" strokeWidth={0.9} /></g>,
  <Ellip c="#e82020" f="#a8a8b4" />,
  <Ellip c="#8a5a20" f="#a8a8b4" />,
  <Ellip c="#208a30" f="#9abaa4" />,
  <Ellip c="#30e030" f="#b0d8c0" />,
  <Diag c="#222222" />,
  <Diag c="#30b030" />,
  <Diag c="#e81818" />,
  <HLine c="#111111" />,
  <HLine c="#f09080" />,
  <HLine c="#30e030" />,
  <HLine c="#0a6a0a" />,
  <HLine c="#e81818" />,
  <HLine c="#6090f0" />,
  <HLine c="#0a0aa0" />,
  <line x1={9} x2={9} y1={2} y2={16} stroke="#4a5a64" strokeWidth={1.2} />,
  <g><path d="M3 14L13 4M3 14h12" fill="none" stroke="#e06060" strokeWidth={1} /><circle cx={9} cy={11} r={2.2} fill="none" stroke="#2040e0" strokeWidth={0.9} /><text x={13} y={8} fill="#2040e0" className="text-[6px] font-bold">o</text></g>,
  <g><circle cx={9} cy={10} r={5} fill="none" stroke="#f08040" strokeWidth={1.2} /><path d="M9 8v4M7 10h4" stroke="#2040e0" strokeWidth={1} /><circle cx={14} cy={4} r={1} fill="#f08040" /></g>,
  <text x={9} y={12} textAnchor="middle" fill="#2040d0" className="text-[7px] font-bold" letterSpacing="-0.8">1234</text>,
  <text x={9} y={12} textAnchor="middle" fill="#2040d0" className="text-[7px] font-bold" letterSpacing="-0.4">abc</text>,
  <path d="M3 9l4 5 8-10-1-1-7 7-3-2z" fill="#48a848" />,
  <path d="M3 9h3v7H3zM7 9l3-6 2 1-1 4h5l-1 8H7z" fill="#48a848" />,
  <path d="M3 5l2-2 4 4 4-4 2 2-4 4 4 4-2 2-4-4-4 4-2-2 4-4z" fill="#e81818" />,
];

const LeftBar: React.FC = () => (
  <div className="w-[23px] shrink-0 flex flex-col items-center bg-gradient-to-r from-[#a4bfcb] to-[#95b1be] border-r-2 border-[#7d99a6]">
    <div className="h-[10px] w-full flex items-center justify-center">
      <svg viewBox="0 0 8 8" className="w-[6px] h-[6px]"><path d="M1.5 5.5L4 3l2.5 2.5" fill="none" stroke="#dfeaef" strokeWidth={1.2} /></svg>
    </div>
    {tools.map((t, i) => (
      <div key={i} className={`w-[18px] h-[18.4px] flex items-center justify-center rounded-[2px] shrink-0 ${i === 0 ? 'bg-[#b3c6cf] border border-[#7d919b]' : ''}`}>
        <svg viewBox="0 0 18 18" className="w-[17px] h-[17px]">{t}</svg>
      </div>
    ))}
    <div className="h-[10px] w-full mt-[5px] bg-[#b5cbd5] flex items-center justify-center border-y border-[#7d99a6]">
      <svg viewBox="0 0 8 8" className="w-[6px] h-[6px]"><path d="M1.5 2.5L4 5l2.5-2.5" fill="none" stroke="#333333" strokeWidth={1.2} /></svg>
    </div>
    <svg viewBox="0 0 18 18" className="w-[17px] h-[17px] mt-[1px]">
      <circle cx={5} cy={4} r={3} fill="#30a030" />
      <text x={5} y={6} textAnchor="middle" fill="#ffffff" className="text-[5px] font-bold">1</text>
      <rect x={4} y={6} width={7} height={8} fill="#ffffff" stroke="#555555" strokeWidth={0.7} />
      <rect x={9} y={8} width={7} height={7} fill="#d8d8d8" stroke="#555555" strokeWidth={0.7} />
    </svg>
    <div className="mt-[10px] flex gap-[1px]">
      {[0, 1, 2].map((i) => <span key={i} className="w-[2px] h-[2px] bg-[#333333]" />)}
    </div>
  </div>
);

const BottomBar: React.FC = () => (
  <div className="h-[17px] shrink-0 flex items-center bg-gradient-to-b from-[#a5c3cf] to-[#94b4c2] border-t border-[#6c8996]">
    <span className="w-[23px] h-full flex items-center justify-center border-r border-[#7d99a6] shrink-0">
      <svg viewBox="0 0 14 14" className="w-[13px] h-[13px]"><path d="M1 13L4 4l3 6 3-8" fill="none" stroke="#b06030" strokeWidth={1.3} /><path d="M2 13L12 1" stroke="#7a9a30" strokeWidth={1.6} /></svg>
    </span>
    <span className="flex items-center gap-[5px] pl-[3px] shrink-0">
      <svg viewBox="0 0 14 14" className="w-[13px] h-[13px]"><path d="M3 7l8-4M3 7l8 4" stroke="#eef4f6" strokeWidth={1.2} /><circle cx={3} cy={7} r={1.8} fill="#eef4f6" /><circle cx={11} cy={3} r={1.8} fill="#eef4f6" /><circle cx={11} cy={11} r={1.8} fill="#eef4f6" /></svg>
      <svg viewBox="0 0 14 14" className="w-[13px] h-[13px]"><rect x={1} y={2} width={9} height={7} rx={2} fill="#5090e0" /><rect x={5} y={5} width={8} height={6} rx={2} fill="#d8e8f4" stroke="#5090e0" strokeWidth={0.7} /></svg>
      <svg viewBox="0 0 14 14" className="w-[13px] h-[13px]"><rect x={3} y={1} width={9} height={12} fill="#f0f0f0" stroke="#555555" strokeWidth={0.7} /><path d="M4.5 4h6M4.5 7h6M4.5 10h6" stroke="#d04040" strokeWidth={1} /></svg>
      <svg viewBox="0 0 14 14" className="w-[13px] h-[13px]"><path d="M4 1v12M10 1v12" stroke="#20802a" strokeWidth={1} /><rect x={2} y={3} width={4} height={7} fill="#30a030" /><rect x={8} y={4} width={4} height={3} fill="#e03030" /><rect x={8} y={8} width={4} height={3} fill="#30a030" /></svg>
      <svg viewBox="0 0 14 14" className="w-[13px] h-[13px]"><rect x={1} y={1} width={9} height={8} fill="#f0f6fa" stroke="#3070c0" strokeWidth={0.8} /><rect x={5} y={5} width={8} height={8} fill="#f0f6fa" stroke="#3070c0" strokeWidth={0.8} /><path d="M6 11l2-3 2 2 2-2" fill="none" stroke="#30a030" strokeWidth={0.9} /></svg>
    </span>
    <span className="ml-[6px] text-[9px] text-[#5a6e78] w-[8px] shrink-0">«</span>
    <span className="ml-[2px] w-[11px] h-[11px] bg-[#d2e0e6] border border-[#7d919b] flex items-center justify-center text-[7px] font-bold text-[#333333] shrink-0">‹</span>
    <div className="flex-1 h-[11px] flex bg-[#b3cbd6] border-y border-[#92aab6]">
      <span className="w-[238px] bg-[#a5c0cc] border-r border-[#92aab6]" />
    </div>
    <span className="w-[11px] h-[11px] bg-[#d2e0e6] border border-[#7d919b] flex items-center justify-center text-[7px] font-bold text-[#333333] shrink-0">›</span>
    <span className="flex items-center gap-[5px] pl-[9px] pr-[0px] shrink-0">
      <svg viewBox="0 0 14 14" className="w-[13px] h-[13px]"><path d="M3 5h6a3 3 0 0 1 0 7H6" fill="none" stroke="#6f9ad0" strokeWidth={1.6} /><path d="M1 5l4-3v6z" fill="#6f9ad0" /></svg>
      <svg viewBox="0 0 14 14" className="w-[13px] h-[13px]"><path d="M11 5H5a3 3 0 0 0 0 7h3" fill="none" stroke="#6f9ad0" strokeWidth={1.6} /><path d="M13 5l-4-3v6z" fill="#6f9ad0" /></svg>
      <svg viewBox="0 0 14 14" className="w-[13px] h-[13px]"><path d="M2 12l7-8" stroke="#555555" strokeWidth={2} /><rect x={7} y={1} width={6} height={5} fill="#30b030" /><rect x={2} y={5} width={5} height={5} fill="#e03030" /></svg>
      <svg viewBox="0 0 14 14" className="w-[13px] h-[13px]"><circle cx={6} cy={6} r={4} fill="#ffffff" stroke="#333333" strokeWidth={1.2} /><path d="M9 9l4 4" stroke="#333333" strokeWidth={1.8} /><path d="M1 13h5M12 1v5" stroke="#2040d0" strokeWidth={1} /></svg>
      <svg viewBox="0 0 14 14" className="w-[13px] h-[13px]"><circle cx={6} cy={6} r={4} fill="#ffffff" stroke="#333333" strokeWidth={1.2} /><path d="M9 9l4 4" stroke="#333333" strokeWidth={1.8} /><path d="M4 6h4" stroke="#2040d0" strokeWidth={1.2} /></svg>
      <svg viewBox="0 0 14 14" className="w-[13px] h-[13px]"><circle cx={6} cy={6} r={4} fill="#ffffff" stroke="#333333" strokeWidth={1.2} /><path d="M9 9l4 4" stroke="#333333" strokeWidth={1.8} /><path d="M4 6h4M6 4v4" stroke="#2040d0" strokeWidth={1.2} /></svg>
      <svg viewBox="0 0 14 14" className="w-[13px] h-[13px]"><path d="M1 4h12" stroke="#333333" strokeWidth={1.2} strokeDasharray="1 1" /><path d="M7 5v5" stroke="#2060d0" strokeWidth={1.4} /><path d="M4 9h6l-3 3z" fill="#2060d0" /></svg>
    </span>
  </div>
);

const TimeAxis: React.FC = () => (
  <div className="h-[13px] shrink-0 flex bg-white border-t border-[#a6b5bd]">
    <div className="relative flex-1">
      {years.map((y, i) => (
        <span key={y} className="absolute top-[1px] -translate-x-1/2 text-[8px] font-bold leading-[11px] text-[#333333]" style={{ left: yearX(i) - 23 }}>{y}</span>
      ))}
      <span className="absolute left-[896px] top-[1px] w-[35px] h-[11px] leading-[10px] text-center bg-[#ffff00] border border-[#7a7a40] text-[8px] font-bold text-[#333300] whitespace-nowrap tracking-[-0.2px]">abr 2019</span>
    </div>
    <div className="w-[32px] border-l-2 border-[#8fa8b4]" />
  </div>
);

const Divider: React.FC = () => <div className="h-px shrink-0 bg-[#a6b5bd]" />;

const App: React.FC = () => (
  <div className="w-[1600px] h-[862px] flex flex-col overflow-hidden bg-white font-['Liberation_Sans',Arial,sans-serif] text-[#222222]">
    <TopBar />
    <div className="flex flex-1 min-h-0">
      <LeftBar />
      <div className="flex-1 min-w-0 flex flex-col">
        <Pane cls="h-[524px]" top={19} labels={mainAxis}>
          <MainChart />
          <div className="absolute left-[1px] top-0 h-[13px] flex items-center bg-[#d5e3ea] border border-[#92aab6] text-[8px] font-bold text-[#2b3640] whitespace-nowrap">
            <span className="flex gap-[2px] px-[2px]">
              <LegendCross cls="text-[#e03030]" />
              <LegendCross cls="text-[#30a030]" />
              <CircleX />
            </span>
            <span className="flex items-center gap-[3px] h-full w-[38px] pl-[3px] border-l border-[#a4b8c2]"><span className="w-[7px] h-[7px] bg-[#eef3f5] border border-[#8a9aa2]" />Precio</span>
            <span className="flex items-center justify-center h-full w-[14px] border-l border-[#a4b8c2]">
              <svg viewBox="0 0 8 8" className="w-[7px] h-[7px]"><path d="M0 1h1M2 1h6M0 4h1M2 4h6M0 7h1M2 7h6" stroke="#3a4a54" strokeWidth={1} /></svg>
            </span>
            <span className="flex items-center gap-[3px] h-full w-[53px] pl-[3px] border-l border-[#a4b8c2]"><span className="w-[7px] h-[7px] bg-[#eef3f5] border border-[#8a9aa2]" />Cierre (W)</span>
            <span className="flex items-center gap-[3px] h-full w-[115px] pl-[3px] border-l border-[#a4b8c2]"><span className="w-[6px] h-[6px] bg-[#7e8f98]" />Tunel Domenec v4 (t t t t t)</span>
            <span className="flex items-center gap-[3px] h-full w-[96px] pl-[3px] border-l border-[#a4b8c2]"><span className="w-[7px] h-[7px] bg-gradient-to-r from-[#c03030] via-[#c0c030] to-[#2050a0]" />Control Total Doc v.6</span>
          </div>
          <div className="absolute left-[10px] top-[12px] text-[33px] leading-[37px] font-bold text-[#0a0a0a] pointer-events-none">
            <div>USDJPY, Q</div>
            <div>USD/JPY</div>
          </div>
          <span className="absolute left-[2px] bottom-0 text-[8px] leading-[11px] text-[#444444]">IT-Finance.com - Tiempo Real</span>
        </Pane>
        <Divider />
        <Pane cls="h-[96px]" top={544} labels={[
          { y: 551, t: '100', box: true },
          { y: 556, t: '95,695', color: '#1010b0', box: true },
          { y: 566, t: '85,339', box: true },
          { y: 568, t: '80', box: true },
          { y: 577, t: '74,921', box: true },
          { y: 585, t: '60' },
          { y: 594, t: '50', color: '#1010c0', box: true },
          { y: 602, t: '40' },
          { y: 620, t: '20', box: true },
          { y: 635, t: '0', box: true },
        ]}>
          <TrendPane />
          <PaneTitle cls="top-[1px]" title="Sistema de trenes Doc v4 (f f)" icon="dark" />
        </Pane>
        <Divider />
        <Pane cls="h-[73px]" top={641} labels={[
          { y: 651, t: '-4,3966', color: '#10c010', box: true },
          { y: 663, t: '-25', color: '#1010b0', box: true },
          { y: 672, t: '-40' },
          { y: 679, t: '-50', color: '#1010b0', box: true },
          { y: 686, t: '-60' },
          { y: 695, t: '-75', color: '#d01010', box: true },
          { y: 708, t: '-100', box: true },
        ]}>
          <WillyPane />
          <PaneTitle cls="top-[2px]" title="Willy Doc (t)" />
        </Pane>
        <Divider />
        <Pane cls="h-[69px]" top={715} labels={[
          { y: 722, t: '-- ---', color: '#e08010', box: true },
          { y: 729, t: '16,858', color: '#1010f0', box: true },
          { y: 740, t: '0', color: '#1010f0', box: true },
          { y: 751, t: '-20' },
          { y: 764, t: '-40' },
          { y: 776, t: '-60' },
        ]}>
          <AwesomePane />
          <PaneTitle cls="top-[1px]" title="Awesome Evolution Doc" />
        </Pane>
        <Divider />
        <Pane cls="h-[47px]" top={785} labels={[
          { y: 788, t: '0,505' },
          { y: 809, t: '0,5000', box: true },
          { y: 827, t: '0,495' },
        ]}>
          <ForcePane />
          <PaneTitle cls="top-0" title="Barra Fuerza Fondo Mercado v4 (f)" icon="dark" />
        </Pane>
        <TimeAxis />
      </div>
    </div>
    <BottomBar />
  </div>
);

export default App;
